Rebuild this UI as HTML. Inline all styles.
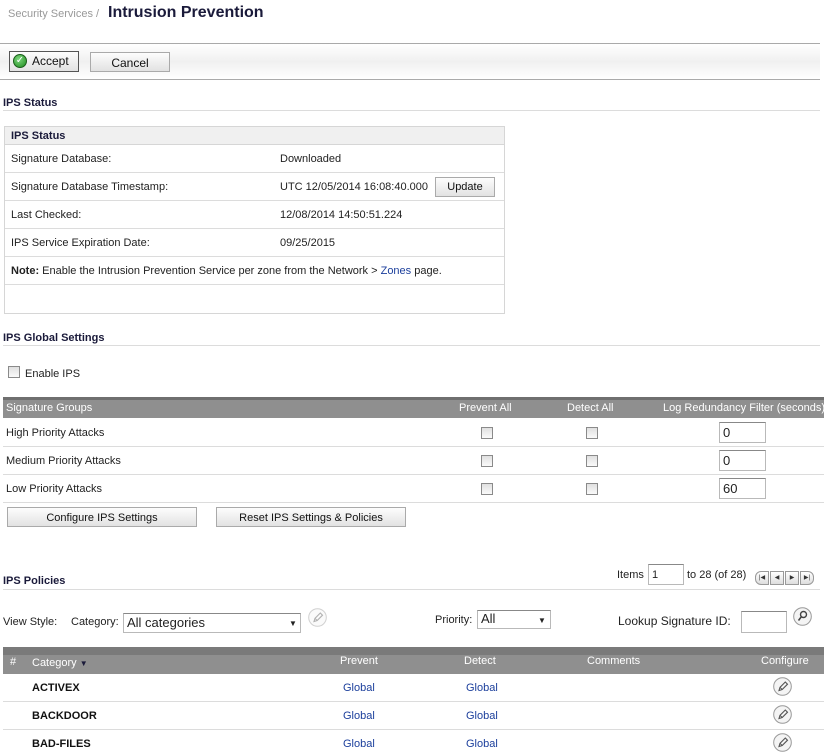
<!DOCTYPE html>
<html><head><meta charset="utf-8"><style>
*{box-sizing:border-box}
body{margin:0;width:824px;height:754px;overflow:hidden;background:#fff;font-family:"Liberation Sans",sans-serif;font-size:11px;color:#222;position:relative}
.a{position:absolute;white-space:nowrap}
.btn{position:absolute;border:1px solid #aaa;background:linear-gradient(#fdfdfd,#e2e2e2);font-size:11px;text-align:center;color:#111}
.hl{position:absolute;height:1px;background:#dcdcdc}
.cb{position:absolute;width:12px;height:12px;border:1px solid #8a8a8a;background:linear-gradient(#e0e0e0,#fafafa)}
.inp{position:absolute;border:1px solid #b9b9b9;border-top-color:#888;background:#fff;font-size:13px;padding:2px 0 0 3px}
.lnk{color:#1c3f9c}
.pen{position:absolute;width:19px;height:19px}
.pg{position:absolute;top:571px;width:14px;height:14px;border:1px solid #999;background:linear-gradient(#fff,#ddd);font-size:6px;line-height:12px;text-align:center;color:#333}
</style></head><body>
<svg width="0" height="0" style="position:absolute"><defs>
<symbol id="pe" viewBox="0 0 19 19"><circle cx="9.5" cy="9.5" r="8.8" fill="#f4f4f4" stroke="#999"/><path d="M6 13.5l1-3.2 5.3-5.3 2.2 2.2-5.3 5.3z" fill="none" stroke="#555" stroke-width="1.1"/><path d="M7 10.3l2.2 2.2" stroke="#555" stroke-width="1"/></symbol>
</defs></svg>
<div class="a" style="left:8px;top:8px;font-size:11px;color:#999">Security Services /</div>
<div class="a" style="left:108px;top:4px;font-size:16px;font-weight:bold;color:#1a1a3a">Intrusion Prevention</div>
<div class="hl" style="left:0;top:43px;width:820px;background:#aaa"></div>
<div class="a" style="left:0;top:44px;width:820px;height:35px;background:linear-gradient(#fff,#f0f0f0 50%,#fff)"></div>
<div class="hl" style="left:0;top:79px;width:820px;background:#aaa"></div>
<div class="btn" style="left:9px;top:51px;width:70px;height:21px;border-color:#555;text-align:left;padding:2px 0 0 22px;font-size:12px">Accept</div>
<div class="a" style="left:13px;top:54px;width:14px;height:14px;border-radius:50%;background:radial-gradient(circle at 40% 35%,#7ed87e,#1d8a1d);border:1px solid #1a5d1a;color:#fff;font-size:10px;line-height:12px;text-align:center">✓</div>
<div class="btn" style="left:90px;top:52px;width:80px;height:20px;padding-top:3px;font-size:12px">Cancel</div>

<div class="a" style="left:3px;top:97px;font-weight:bold;color:#1a1a3a">IPS Status</div>
<div class="hl" style="left:3px;top:110px;width:817px"></div>
<div class="a" style="left:4px;top:126px;width:501px;height:188px;border:1px solid #d6d6d6"></div>
<div class="a" style="left:5px;top:127px;width:499px;height:18px;background:#f0f0f0;border-bottom:1px solid #d6d6d6;font-weight:bold;padding:3px 0 0 6px;color:#1a1a3a">IPS Status</div>
<div class="hl" style="left:5px;top:172px;width:499px"></div>
<div class="hl" style="left:5px;top:200px;width:499px"></div>
<div class="hl" style="left:5px;top:228px;width:499px"></div>
<div class="hl" style="left:5px;top:256px;width:499px"></div>
<div class="hl" style="left:5px;top:284px;width:499px"></div>
<div class="a" style="left:11px;top:153px">Signature Database:</div><div class="a" style="left:280px;top:153px">Downloaded</div>
<div class="a" style="left:11px;top:181px">Signature Database Timestamp:</div><div class="a" style="left:280px;top:181px">UTC 12/05/2014 16:08:40.000</div>
<div class="btn" style="left:435px;top:177px;width:60px;height:20px;padding-top:3px">Update</div>
<div class="a" style="left:11px;top:209px">Last Checked:</div><div class="a" style="left:280px;top:209px">12/08/2014 14:50:51.224</div>
<div class="a" style="left:11px;top:237px">IPS Service Expiration Date:</div><div class="a" style="left:280px;top:237px">09/25/2015</div>
<div class="a" style="left:11px;top:265px"><b>Note:</b> Enable the Intrusion Prevention Service per zone from the Network &gt; <span class="lnk">Zones</span> page.</div>

<div class="a" style="left:3px;top:332px;font-weight:bold;color:#1a1a3a">IPS Global Settings</div>
<div class="hl" style="left:3px;top:345px;width:817px"></div>
<div class="cb" style="left:8px;top:366px"></div>
<div class="a" style="left:25px;top:368px">Enable IPS</div>
<div class="a" style="left:3px;top:397px;width:821px;height:21px;background:linear-gradient(#6f6f6f 0,#6f6f6f 3px,#8f8f8f 3px);color:#fff;padding-top:5px">
<span class="a" style="left:3px">Signature Groups</span><span class="a" style="left:456px">Prevent All</span><span class="a" style="left:564px">Detect All</span><span class="a" style="left:660px">Log Redundancy Filter (seconds)</span></div>
<div class="hl" style="left:3px;top:446px;width:821px"></div>
<div class="hl" style="left:3px;top:474px;width:821px"></div>
<div class="hl" style="left:3px;top:502px;width:821px"></div>
<div class="a" style="left:6px;top:427px">High Priority Attacks</div>
<div class="a" style="left:6px;top:455px">Medium Priority Attacks</div>
<div class="a" style="left:6px;top:483px">Low Priority Attacks</div>
<div class="cb" style="left:481px;top:427px"></div><div class="cb" style="left:586px;top:427px"></div>
<div class="cb" style="left:481px;top:455px"></div><div class="cb" style="left:586px;top:455px"></div>
<div class="cb" style="left:481px;top:483px"></div><div class="cb" style="left:586px;top:483px"></div>
<div class="inp" style="left:719px;top:422px;width:47px;height:21px">0</div>
<div class="inp" style="left:719px;top:450px;width:47px;height:21px">0</div>
<div class="inp" style="left:719px;top:478px;width:47px;height:21px">60</div>
<div class="btn" style="left:7px;top:507px;width:190px;height:20px;padding-top:4px">Configure IPS Settings</div>
<div class="btn" style="left:216px;top:507px;width:190px;height:20px;padding-top:4px">Reset IPS Settings &amp; Policies</div>

<div class="a" style="left:3px;top:575px;font-weight:bold;color:#1a1a3a">IPS Policies</div>
<div class="hl" style="left:3px;top:589px;width:817px"></div>
<div class="a" style="left:617px;top:569px">Items</div>
<div class="inp" style="left:648px;top:564px;width:36px;height:21px;font-size:11px;padding-top:4px">1</div>
<div class="a" style="left:687px;top:569px">to 28 (of 28)</div>
<div class="pg" style="left:755px;border-radius:6px 0 0 6px">|◀</div>
<div class="pg" style="left:770px">◀</div>
<div class="pg" style="left:785px">▶</div>
<div class="pg" style="left:800px;border-radius:0 6px 6px 0">▶|</div>
<div class="a" style="left:3px;top:616px">View Style:</div>
<div class="a" style="left:71px;top:616px">Category:</div>
<div class="inp" style="left:123px;top:613px;width:178px;height:20px;padding-top:1px">All categories<span class="a" style="left:165px;top:5px;font-size:8px">▼</span></div>
<svg class="pen" style="left:308px;top:608px;opacity:.45"><use href="#pe"/></svg>
<div class="a" style="left:435px;top:614px">Priority:</div>
<div class="inp" style="left:477px;top:610px;width:74px;height:19px;padding-top:0">All<span class="a" style="left:60px;top:5px;font-size:8px">▼</span></div>
<div class="a" style="left:618px;top:614px;font-size:12px">Lookup Signature ID:</div>
<div class="inp" style="left:741px;top:611px;width:46px;height:22px"></div>
<svg class="pen" style="left:793px;top:607px" viewBox="0 0 19 19"><circle cx="9.5" cy="9.5" r="8.8" fill="#f4f4f4" stroke="#999"/><circle cx="10.5" cy="7.5" r="3" fill="none" stroke="#444" stroke-width="1.4"/><path d="M8.5 9.5l-3 4" stroke="#444" stroke-width="1.6"/></svg>

<div class="a" style="left:3px;top:647px;width:821px;height:27px;background:linear-gradient(#7a7a7a 0,#7a7a7a 8px,#8f8f8f 8px);color:#fff">
<span class="a" style="left:7px;top:9px">#</span><span class="a" style="left:29px;top:10px">Category <span style="color:#1a1a3a;font-size:8px">▼</span></span>
<span class="a" style="left:337px;top:8px">Prevent</span><span class="a" style="left:461px;top:8px">Detect</span><span class="a" style="left:584px;top:8px">Comments</span><span class="a" style="left:758px;top:8px">Configure</span></div>
<div class="hl" style="left:3px;top:701px;width:821px"></div>
<div class="hl" style="left:3px;top:729px;width:821px"></div>
<div class="a" style="left:32px;top:682px;font-weight:bold;color:#111">ACTIVEX</div>
<div class="a" style="left:32px;top:710px;font-weight:bold;color:#111">BACKDOOR</div>
<div class="a" style="left:32px;top:738px;font-weight:bold;color:#111">BAD-FILES</div>
<div class="a lnk" style="left:343px;top:682px">Global</div><div class="a lnk" style="left:466px;top:682px">Global</div>
<div class="a lnk" style="left:343px;top:710px">Global</div><div class="a lnk" style="left:466px;top:710px">Global</div>
<div class="a lnk" style="left:343px;top:738px">Global</div><div class="a lnk" style="left:466px;top:738px">Global</div>
<svg class="pen" style="left:773px;top:677px"><use href="#pe"/></svg>
<svg class="pen" style="left:773px;top:705px"><use href="#pe"/></svg>
<svg class="pen" style="left:773px;top:733px"><use href="#pe"/></svg>
</body></html>
